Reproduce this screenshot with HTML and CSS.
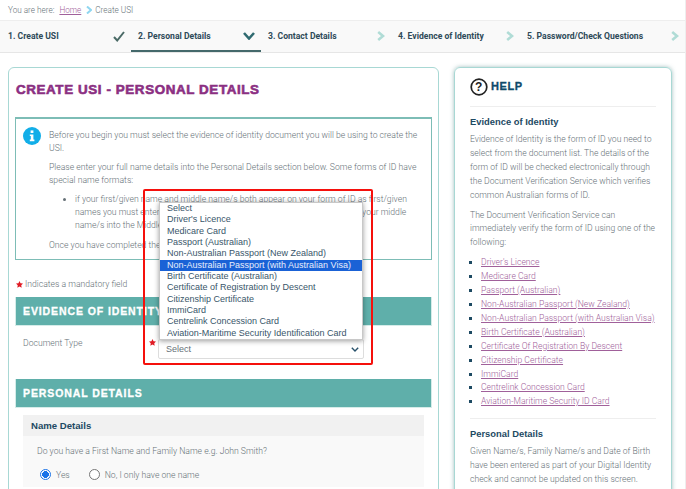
FILE: index.html
```html
<!DOCTYPE html>
<html lang="en">

<head>
    <meta charset="UTF-8">
    <meta name="viewport" content="width=device-width, initial-scale=1.0">
    <title>Create USI - Personal Details</title>
    <link rel="stylesheet" href="styles.css">
</head>

<body>

    <div class="breadcrumb">
        <span>You are here:</span>
        <a href="#">Home</a>
        <svg class="crumb-arrow" width="6" height="8" viewBox="0 0 6 8"><path d="M1 0.5 L5 4 L1 7.5" fill="none" stroke="#8fd6f0" stroke-width="2"/></svg>
        <span>Create USI</span>
    </div>

    <div class="steps">
        <div class="step">
            <span>1. Create USI</span>
            <svg width="12" height="11" viewBox="0 0 12 11"><path d="M1 6 L4.2 9.5 L11 1" fill="none" stroke="#4a6a66" stroke-width="2"/></svg>
        </div>
        <div class="step active">
            <span>2. Personal Details</span>
            <svg width="12" height="8" viewBox="0 0 12 8"><path d="M1 1 L6 6.5 L11 1" fill="none" stroke="#2f6a70" stroke-width="2.6"/></svg>
        </div>
        <div class="step">
            <span>3. Contact Details</span>
            <svg class="chev" width="8" height="10" viewBox="0 0 8 10"><path d="M1.2 1 L6 5 L1.2 9" fill="none" stroke="#b0dcd6" stroke-width="2.6"/></svg>
        </div>
        <div class="step">
            <span>4. Evidence of Identity</span>
            <svg class="chev" width="8" height="10" viewBox="0 0 8 10"><path d="M1.2 1 L6 5 L1.2 9" fill="none" stroke="#b0dcd6" stroke-width="2.6"/></svg>
        </div>
        <div class="step">
            <span>5. Password/Check Questions</span>
            <svg class="chev" width="8" height="10" viewBox="0 0 8 10"><path d="M1.2 1 L6 5 L1.2 9" fill="none" stroke="#b0dcd6" stroke-width="2.6"/></svg>
        </div>
    </div>

    <div class="content">
        <div class="main-panel">
            <h1>CREATE USI - PERSONAL DETAILS</h1>

            <div class="info-box">
                <svg class="info-icon" width="18" height="18" viewBox="0 0 18 18">
                    <circle cx="9" cy="9" r="9" fill="#12aee8"/>
                    <rect x="7.6" y="3.4" width="2.8" height="2.6" fill="#fff"/>
                    <path d="M6.8 7.4 H10.4 V12.6 H11.4 V14.2 H6.8 V12.6 H7.8 V9 H6.8 Z" fill="#fff"/>
                </svg>
                <div class="info-text">
                    <p>Before you begin you must select the evidence of identity document you will be using to create the USI.</p>
                    <p>Please enter your full name details into the Personal Details section below. Some forms of ID have special name formats:</p>
                    <ul>
                        <li>if your first/given name and middle name/s both appear on your form of ID as first/given names you must enter your first/given name/s into the First Name field, and your middle name/s into the Middle Name field.</li>
                    </ul>
                    <p>Once you have completed the section below select Next.</p>
                </div>
            </div>

            <div class="mandatory">
                <svg class="star" width="7" height="7" viewBox="0 0 10 10"><path d="M5 0 L6.5 3.2 L10 3.7 L7.5 6.1 L8.1 9.6 L5 7.9 L1.9 9.6 L2.5 6.1 L0 3.7 L3.5 3.2 Z" fill="#e01b24"/></svg>
                Indicates a mandatory field
            </div>

            <h2 class="section-bar">EVIDENCE OF IDENTITY</h2>

            <div class="doc-row">
                <label>Document Type</label>
                <svg class="star" width="7" height="7" viewBox="0 0 10 10"><path d="M5 0 L6.5 3.2 L10 3.7 L7.5 6.1 L8.1 9.6 L5 7.9 L1.9 9.6 L2.5 6.1 L0 3.7 L3.5 3.2 Z" fill="#e01b24"/></svg>
                <div class="select-wrap">
                    <div class="select-list">
                        <div>Select</div>
                        <div>Driver's Licence</div>
                        <div>Medicare Card</div>
                        <div>Passport (Australian)</div>
                        <div>Non-Australian Passport (New Zealand)</div>
                        <div class="selected">Non-Australian Passport (with Australian Visa)</div>
                        <div>Birth Certificate (Australian)</div>
                        <div>Certificate of Registration by Descent</div>
                        <div>Citizenship Certificate</div>
                        <div>ImmiCard</div>
                        <div>Centrelink Concession Card</div>
                        <div>Aviation-Maritime Security Identification Card</div>
                    </div>
                    <div class="select-box">
                        <span>Select</span>
                        <svg width="8" height="5" viewBox="0 0 8 5"><path d="M0.8 0.8 L4 4 L7.2 0.8" fill="none" stroke="#27506a" stroke-width="1.4"/></svg>
                    </div>
                </div>
            </div>

            <h2 class="section-bar">PERSONAL DETAILS</h2>

            <div class="name-box">
                <div class="name-head">Name Details</div>
                <div class="name-body">
                    <p>Do you have a First Name and Family Name e.g. John Smith?</p>
                    <div class="radios">
                        <span class="radio on"></span><span class="radio-label first">Yes</span>
                        <span class="radio"></span><span class="radio-label">No, I only have one name</span>
                    </div>
                </div>
            </div>
        </div>

        <div class="help-panel">
            <div class="help-title">
                <svg width="18" height="18" viewBox="0 0 18 18">
                    <circle cx="9" cy="9" r="7.8" fill="none" stroke="#222" stroke-width="1.7"/>
                    <text x="9" y="13" text-anchor="middle" class="q-mark">?</text>
                </svg>
                <span>HELP</span>
            </div>
            <h3>Evidence of Identity</h3>
            <p>Evidence of Identity is the form of ID you need to select from the document list. The details of the form of ID will be checked electronically through the Document Verification Service which verifies common Australian forms of ID.</p>
            <p>The Document Verification Service can immediately verify the form of ID using one of the following:</p>
            <ul>
                <li><a href="#">Driver's Licence</a></li>
                <li><a href="#">Medicare Card</a></li>
                <li><a href="#">Passport (Australian)</a></li>
                <li><a href="#">Non-Australian Passport (New Zealand)</a></li>
                <li><a href="#">Non-Australian Passport (with Australian Visa)</a></li>
                <li><a href="#">Birth Certificate (Australian)</a></li>
                <li><a href="#">Certificate Of Registration By Descent</a></li>
                <li><a href="#">Citizenship Certificate</a></li>
                <li><a href="#">ImmiCard</a></li>
                <li><a href="#">Centrelink Concession Card</a></li>
                <li><a href="#">Aviation-Maritime Security ID Card</a></li>
            </ul>
            <hr>
            <h3>Personal Details</h3>
            <p>Given Name/s, Family Name/s and Date of Birth have been entered as part of your Digital Identity check and cannot be updated on this screen.</p>
        </div>
    </div>

    <div class="red-box"></div>

</body>

</html>
```

FILE: styles.css
```css
html,
body {
    height: 489px;
    overflow: hidden;
}

body {
    position: relative;
    margin: 0;
    padding: 0;
    font-family: Roboto, Arial, sans-serif;
    font-size: 8.65px;
    font-weight: 300;
    color: #667177;
    background-color: #fff;
    border-right: 1px solid #eee;
    box-sizing: border-box;
}

p {
    margin: 0;
}

.breadcrumb {
    display: flex;
    align-items: center;
    height: 20px;
    padding-left: 8px;
    font-size: 8.2px;
}

.breadcrumb a {
    margin-left: 5px;
    color: #a0609a;
}

.crumb-arrow {
    margin: 0 3px 0 5px;
}

.steps {
    display: grid;
    grid-template-columns: 130px 130px 130px 129px 1fr;
    height: 31px;
    padding-left: 1px;
    background-color: #f9f9f9;
    border-top: 1px solid #eee;
    border-bottom: 1px solid #e6e6e6;
}

.step {
    display: flex;
    align-items: center;
    justify-content: space-between;
    padding: 0 6px 1px 7px;
    font-size: 8.6px;
    font-weight: 700;
    color: #2e4a58;
    box-sizing: border-box;
}

.step.active {
    border-bottom: 2px solid #44696b;
    padding-bottom: 0;
    padding-top: 1px;
}

.content {
    display: flex;
    align-items: flex-start;
    gap: 15px;
    padding: 14px 0 0 8px;
}

.main-panel {
    position: relative;
    width: 431px;
    height: 460px;
    padding: 0 6px;
    border: 1px solid #a8d8d4;
    border-radius: 6px;
    box-sizing: border-box;
}

h1 {
    margin: 13px 0 19px;
    padding-left: 1px;
    font-family: "Liberation Sans", Arial, sans-serif;
    font-size: 13.4px;
    line-height: 17px;
    font-weight: 700;
    letter-spacing: 0.6px;
    color: #8b2f82;
    -webkit-text-stroke: 0.6px #8b2f82;
}

.info-box {
    display: flex;
    height: 143px;
    padding: 10px 12px 0 7px;
    border: 1px solid #7dbdb6;
    border-top-width: 2px;
    box-sizing: border-box;
}

.info-icon {
    flex: none;
    margin-right: 8px;
    margin-top: -2px;
}

.info-text {
    line-height: 13px;
}

.info-text p {
    margin-bottom: 6px;
}

.info-text ul {
    margin: 0 0 7px;
    padding-left: 26px;
}

.mandatory {
    display: flex;
    align-items: center;
    gap: 2px;
    height: 14px;
    margin: 17px 0 6px;
}

.mandatory .star {
    margin-left: 1px;
}

.section-bar {
    margin: 0;
    height: 29px;
    padding-left: 7px;
    font-family: "Liberation Sans", Arial, sans-serif;
    font-size: 10.5px;
    line-height: 28px;
    letter-spacing: 0.9px;
    font-weight: 700;
    color: #fff;
    background-color: #5fafaa;
    border: 1px solid #d5ece9;
    border-top: 0;
    -webkit-text-stroke: 0.3px #fff;
    box-sizing: border-box;
}

.doc-row {
    display: flex;
    align-items: flex-start;
    height: 53px;
    padding: 13px 0 0 8px;
    box-sizing: border-box;
}

.doc-row label {
    width: 126px;
    margin-top: -1px;
}

.doc-row .star {
    margin-top: 0;
    margin-right: 2px;
}

.select-wrap {
    position: relative;
    width: 206px;
}

.select-box {
    display: flex;
    align-items: center;
    justify-content: space-between;
    height: 20px;
    padding: 0 4px 0 7px;
    border: 1px solid #ddd;
    border-radius: 2px;
    background-color: #fff;
    box-sizing: border-box;
    font-family: "Liberation Sans", Arial, sans-serif;
    font-size: 9px;
    font-weight: 400;
}

/* open list of the select, lies over the text above it */
.select-list {
    position: absolute;
    left: 1px;
    bottom: 19px;
    width: 204px;
    background-color: #fff;
    border: 1px solid #c8c8c8;
    box-shadow: 0 1px 5px rgba(0, 0, 0, 0.4);
    box-sizing: border-box;
    font-family: "Liberation Sans", Arial, sans-serif;
    font-size: 9px;
    font-weight: 400;
    line-height: 11.35px;
    color: #39566a;
    white-space: nowrap;
}

.select-list div {
    padding-left: 7px;
}

.select-list .selected {
    background-color: #1a62d6;
    color: #e8eefb;
}

.name-box {
    margin: 7px 8px 0;
    background-color: #f9f9f9;
}

.name-head {
    height: 21px;
    padding-left: 8px;
    font-family: "Liberation Sans", Arial, sans-serif;
    font-size: 9.6px;
    font-weight: 700;
    line-height: 22px;
    color: #1d4a63;
    background-color: #f1f1f1;
}

.name-body {
    height: 51px;
    padding: 10px 0 0 14px;
    box-sizing: border-box;
}

.radios {
    display: flex;
    align-items: center;
    margin-top: 13px;
    padding-left: 3px;
}

.radio {
    width: 9px;
    height: 9px;
    border: 1px solid #777;
    border-radius: 50%;
    background-color: #fff;
}

.radio.on {
    border: 1px solid #1a73e8;
    background: radial-gradient(circle, #1a73e8 0 3.4px, #fff 3.6px);
}

.radio-label {
    margin-left: 5px;
}

.radio-label.first {
    margin-right: 19px;
}

.help-panel {
    width: 218px;
    height: 460px;
    padding: 9px 15px 0;
    border: 1px solid #a8d8d4;
    border-radius: 6px;
    box-shadow: 0 0 4px rgba(70, 130, 130, 0.5);
    box-sizing: border-box;
    font-size: 8.6px;
    line-height: 13.9px;
}

.help-title {
    display: flex;
    align-items: center;
    gap: 3px;
    height: 20px;
    padding-bottom: 9px;
    margin-bottom: 8px;
    border-bottom: 1px solid #eee;
    font-family: "Liberation Sans", Arial, sans-serif;
    font-size: 11px;
    font-weight: 700;
    letter-spacing: 0.6px;
    color: #0f4a6b;
    -webkit-text-stroke: 0.3px #0f4a6b;
}

.q-mark {
    font-family: "Liberation Sans", Arial, sans-serif;
    font-size: 12px;
    font-weight: 700;
    fill: #222;
    stroke: none;
}

.help-panel h3 {
    margin: 0 0 4px;
    font-family: "Liberation Sans", Arial, sans-serif;
    font-size: 9.4px;
    font-weight: 700;
    line-height: 14px;
    color: #1d4a63;
}

.help-panel p {
    margin-bottom: 6px;
}

.help-panel ul {
    margin: 0 -4px 0 0;
    padding-left: 11px;
    list-style: square;
}

.help-panel li::marker {
    color: #1d4a63;
}

.help-panel a {
    color: #a0609a;
}

.help-panel hr {
    margin: 9px 0 8px;
    border: 0;
    border-top: 1px solid #eee;
}

/* annotation drawn over the screenshot */
.red-box {
    position: absolute;
    left: 143px;
    top: 189px;
    width: 230px;
    height: 176px;
    border: 2.5px solid #f5100c;
    border-radius: 2px;
    box-sizing: border-box;
}
```
